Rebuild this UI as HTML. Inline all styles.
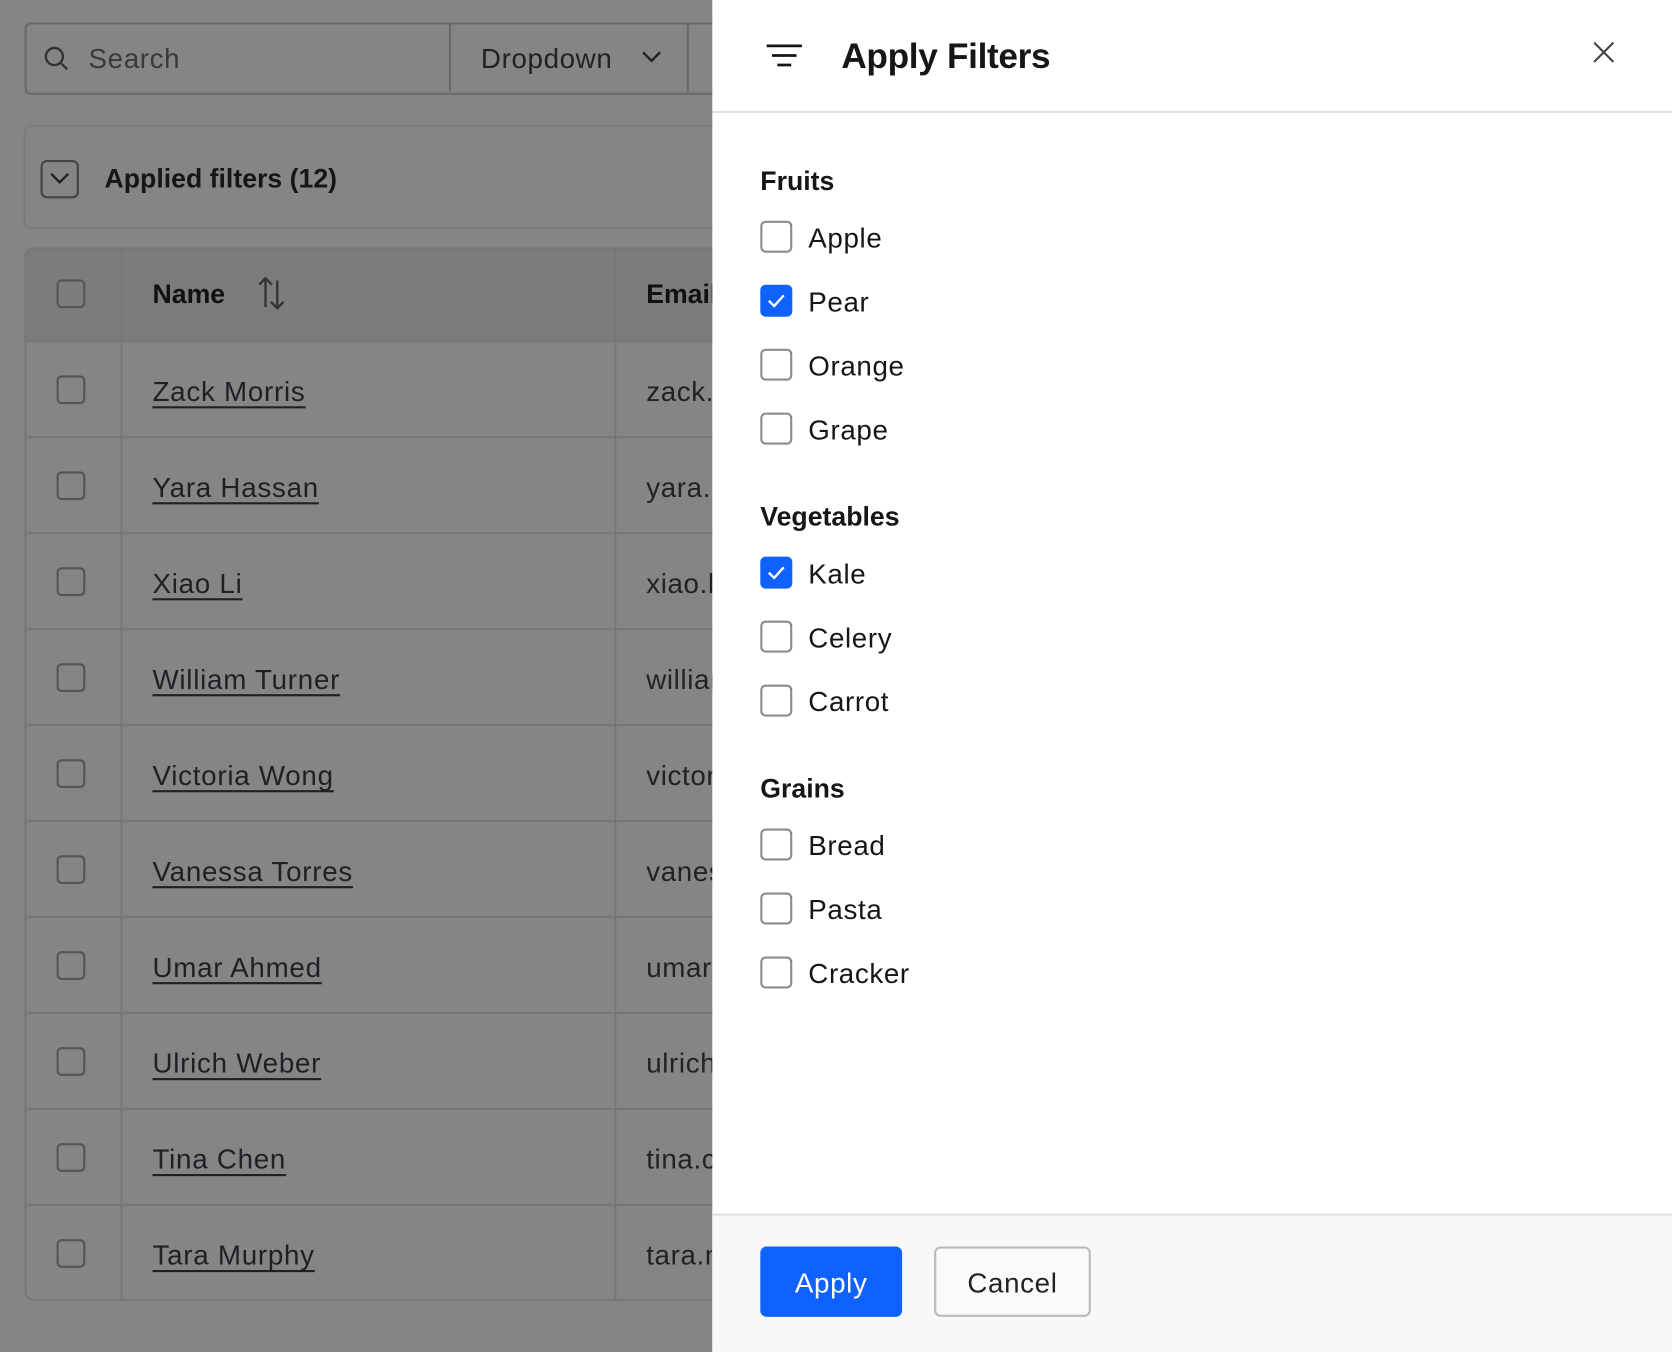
<!DOCTYPE html>
<html><head><meta charset="utf-8"><style>
html,body{margin:0;padding:0;width:1672px;height:1350px;overflow:hidden;background:#858585;}
#s{position:absolute;left:0;top:0;width:1568px;height:1266px;transform:scale(1.06633);transform-origin:0 0;font-family:"Liberation Sans",sans-serif;}
.a{position:absolute;}
.r{font-size:26px;letter-spacing:0.6px;}
.cb{position:absolute;width:27px;height:27px;border:2px solid #555;border-radius:5px;box-sizing:border-box;}
.nm{position:absolute;left:143px;font-size:26px;letter-spacing:0.7px;color:#1f1f25;text-decoration:underline;text-decoration-thickness:2px;text-underline-offset:5px;}
.em{position:absolute;left:606px;font-size:26px;letter-spacing:0.6px;color:#222;}
.row{position:absolute;left:23px;width:660px;height:90px;border-top:2px solid #777;}
.p .cb{width:30px;height:30px;border:2px solid #8a8a92;border-radius:5px;left:713px;background:#fff;}
.p .cb.on{background:#0f62fe;border-color:#0f62fe;}
.lab{position:absolute;left:758px;font-size:26px;letter-spacing:0.6px;color:#161616;}
.h{position:absolute;left:713px;font-size:25px;font-weight:bold;color:#161616;}
</style></head><body><div id="s">
<div class="a" style="left:23px;top:21px;width:680px;height:64px;border:2px solid #6a6a6a;border-radius:6px;"></div>
<div class="a" style="left:421px;top:22px;width:2px;height:64px;background:#6a6a6a"></div>
<div class="a" style="left:644px;top:22px;width:2px;height:64px;background:#6a6a6a"></div>
<svg class="a" style="left:40px;top:42px" width="26" height="26" viewBox="0 0 26 26"><circle cx="11" cy="11" r="8" fill="none" stroke="#333" stroke-width="2.2"/><line x1="17" y1="17" x2="23" y2="23" stroke="#333" stroke-width="2.2"/></svg>
<div class="a r" style="left:83px;top:40px;color:#3a3a3a">Search</div>
<div class="a r" style="left:451px;top:40px;color:#222">Dropdown</div>
<svg class="a" style="left:601px;top:46px" width="20" height="14"><path d="M2 3l8 8 8-8" fill="none" stroke="#222" stroke-width="2.2"/></svg>
<div class="a" style="left:22px;top:117px;width:680px;height:98px;border:2px solid #7b7b7b;border-radius:8px;box-sizing:border-box"></div>
<div class="a" style="left:38px;top:150px;width:36px;height:36px;border:2px solid #444;border-radius:6px;box-sizing:border-box"></div>
<svg class="a" style="left:46px;top:160px" width="20" height="14"><path d="M2 3l8 8 8-8" fill="none" stroke="#222" stroke-width="2.2"/></svg>
<div class="a" style="left:98px;top:154px;font-size:25px;font-weight:bold;color:#161616">Applied filters (12)</div>
<div class="a" style="left:23px;top:232px;width:680px;height:988px;border:2px solid #777;border-radius:8px;box-sizing:border-box"></div>
<div class="a" style="left:25px;top:234px;width:660px;height:86px;background:#7c7c7c;border-radius:6px 0 0 0"></div>
<div class="a" style="left:113px;top:234px;width:2px;height:984px;background:#777"></div>
<div class="a" style="left:576px;top:234px;width:2px;height:984px;background:#777"></div>
<div class="cb" style="left:53px;top:262px"></div>
<div class="a" style="left:143px;top:262px;font-size:25px;font-weight:bold;color:#111">Name</div>
<svg class="a" style="left:240px;top:258px" width="30" height="34"><path d="M9 30V3M3 9l6-6 6 6M20 5v26M14 25l6 6 6-6" fill="none" stroke="#333" stroke-width="2.2"/></svg>
<div class="a" style="left:606px;top:262px;font-size:25px;font-weight:bold;color:#111">Email</div>
<div class="row" style="top:319px"></div><div class="cb" style="left:53px;top:352px"></div><div class="nm" style="top:352px">Zack Morris</div><div class="em" style="top:352px">zack.m</div>
<div class="row" style="top:409px"></div><div class="cb" style="left:53px;top:442px"></div><div class="nm" style="top:442px">Yara Hassan</div><div class="em" style="top:442px">yara.h</div>
<div class="row" style="top:499px"></div><div class="cb" style="left:53px;top:532px"></div><div class="nm" style="top:532px">Xiao Li</div><div class="em" style="top:532px">xiao.li</div>
<div class="row" style="top:589px"></div><div class="cb" style="left:53px;top:622px"></div><div class="nm" style="top:622px">William Turner</div><div class="em" style="top:622px">william</div>
<div class="row" style="top:679px"></div><div class="cb" style="left:53px;top:712px"></div><div class="nm" style="top:712px">Victoria Wong</div><div class="em" style="top:712px">victori</div>
<div class="row" style="top:769px"></div><div class="cb" style="left:53px;top:802px"></div><div class="nm" style="top:802px">Vanessa Torres</div><div class="em" style="top:802px">vaness</div>
<div class="row" style="top:859px"></div><div class="cb" style="left:53px;top:892px"></div><div class="nm" style="top:892px">Umar Ahmed</div><div class="em" style="top:892px">umar.a</div>
<div class="row" style="top:949px"></div><div class="cb" style="left:53px;top:982px"></div><div class="nm" style="top:982px">Ulrich Weber</div><div class="em" style="top:982px">ulrich.</div>
<div class="row" style="top:1039px"></div><div class="cb" style="left:53px;top:1072px"></div><div class="nm" style="top:1072px">Tina Chen</div><div class="em" style="top:1072px">tina.ch</div>
<div class="row" style="top:1129px"></div><div class="cb" style="left:53px;top:1162px"></div><div class="nm" style="top:1162px">Tara Murphy</div><div class="em" style="top:1162px">tara.m</div>
<div class="p a" style="left:0;top:0;width:1568px;height:1266px">
<div class="a" style="left:668px;top:0;width:900px;height:1266px;background:#fff"></div>
<div class="a" style="left:668px;top:104px;width:900px;height:2px;background:#e0e0e6"></div>
<svg class="a" style="left:718px;top:40px" width="36" height="26"><path d="M1 3h33M6 12h23M11 21h13" stroke="#161616" stroke-width="2.6"/></svg>
<div class="a" style="left:789px;top:34px;font-size:33px;font-weight:bold;color:#161616;letter-spacing:-0.3px">Apply Filters</div>
<svg class="a" style="left:1492px;top:37px" width="24" height="24"><path d="M3 3l18 18M21 3L3 21" stroke="#444" stroke-width="2"/></svg>
<div class="h" style="top:156px">Fruits</div>
<div class="cb" style="top:207px"></div><div class="lab" style="top:208px">Apple</div>
<div class="cb on" style="top:267px"></div><svg class="a" style="left:719px;top:274px" width="18" height="16"><path d="M2 8l5 5 9-10" fill="none" stroke="#fff" stroke-width="2.2"/></svg><div class="lab" style="top:268px">Pear</div>
<div class="cb" style="top:327px"></div><div class="lab" style="top:328px">Orange</div>
<div class="cb" style="top:387px"></div><div class="lab" style="top:388px">Grape</div>
<div class="h" style="top:471px">Vegetables</div>
<div class="cb on" style="top:522px"></div><svg class="a" style="left:719px;top:529px" width="18" height="16"><path d="M2 8l5 5 9-10" fill="none" stroke="#fff" stroke-width="2.2"/></svg><div class="lab" style="top:523px">Kale</div>
<div class="cb" style="top:582px"></div><div class="lab" style="top:583px">Celery</div>
<div class="cb" style="top:642px"></div><div class="lab" style="top:643px">Carrot</div>
<div class="h" style="top:726px">Grains</div>
<div class="cb" style="top:777px"></div><div class="lab" style="top:778px">Bread</div>
<div class="cb" style="top:837px"></div><div class="lab" style="top:838px">Pasta</div>
<div class="cb" style="top:897px"></div><div class="lab" style="top:898px">Cracker</div>
<div class="a" style="left:668px;top:1138px;width:900px;height:128px;background:#f8f8f8;border-top:2px solid #e0e0e6"></div>
<div class="a" style="left:713px;top:1169px;width:133px;height:66px;background:#0f62fe;border-radius:6px;color:#fff;font-size:26px;letter-spacing:0.6px;line-height:68px;text-align:center">Apply</div>
<div class="a" style="left:876px;top:1169px;width:147px;height:66px;box-sizing:border-box;border:2px solid #bbb;background:#fafafa;border-radius:6px;color:#222;font-size:26px;letter-spacing:0.6px;line-height:64px;text-align:center">Cancel</div>
</div>
</div></body></html>
